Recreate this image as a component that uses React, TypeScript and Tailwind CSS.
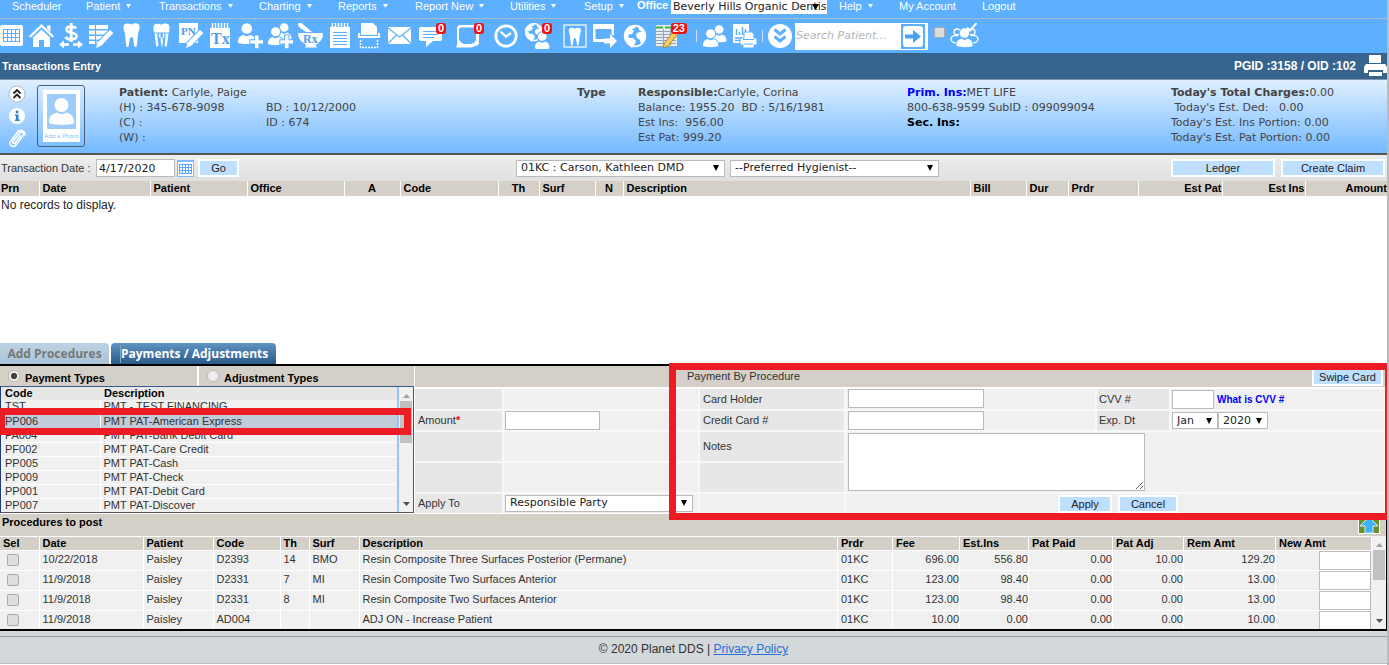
import clsx from "clsx";
import React, { useState } from "react";

const Svg = ({
  w = 24,
  children,
}: {
  w?: number;
  children: React.ReactNode;
}) => (
  <svg
    width={w}
    height={26}
    viewBox={`0 0 ${w} 26`}
    fill="#fff"
    className="shrink-0"
    aria-hidden="true"
  >
    {children}
  </svg>
);

const Person = ({ x = 0, y = 0, s = 1 }) => (
  <g transform={`translate(${x} ${y}) scale(${s})`} paintOrder="stroke">
    <circle cx="8" cy="5" r="4.8" />
    <path d="M0 18c-.4-4 1.200-6.200 5-7.400 1.800 1.800 4.200 1.800 6 0 3.800 1.200 5.400 3.400 5 7.400-2.600 1.600-13.400 1.600-16 0z" />
  </g>
);

const Tooth = ({ x = 0, y = 0, s = 1 }) => (
  <path
    transform={`translate(${x} ${y}) scale(${s})`}
    d="M1 1.800C3-.2 6 .2 8.500 1.600 11-.2 14-.2 16 1.800c1.600 3-.4 6-1 9.200-.6 4-.4 8-1.600 13-2.600.6-2.400-3-2.900-6-.3-2.500-.6-4-2-4s-1.700 1.500-2 4c-.5 3-.3 6.600-2.900 6C2.400 19 2.600 15 2 11 1.400 7.800-.6 4.800 1 1.800z"
  />
);

const Pencil = () => (
  <path
    d="M21 7l3.200 3L12.500 22.500 7 25l1.600-5.400z"
    stroke="#5cb0ff"
    strokeWidth="2"
    paintOrder="stroke"
  />
);

const Globe = ({ cx = 12, cy = 13, r = 11 }) => (
  <g transform={`translate(${cx} ${cy}) scale(${r / 11})`}>
    <circle r="10.400" fill="none" stroke="#fff" strokeWidth="1.600" />
    <path d="M-10-3C-8-8-4-11 1-10.500L0-8l-3 1 2 2-2 3-4 1 1 3 4 0 3 3-1 3-3 4C-8 8-11 3-10-3zM3-9.500C7-8 10-5 10.500 0L9 5 6 8 5 4 2 2 1-2l3-2 3 0-3-2z" />
  </g>
);

const CalendarIcon = () => (
  <Svg w={23}>
    <rect x="0" y="2" width="23" height="21" rx="2" />
    <path
      d="M3 6.500h17M3 10.500h17M3 14.500h17M3 18.500h17M3.500 6v13M7.500 6v13M11.500 6v13M15.500 6v13M19.500 6v13"
      stroke="#5cb0ff"
      fill="none"
    />
  </Svg>
);
const HomeIcon = () => (
  <Svg w={25}>
    <path d="M12.500 1L25 13l-1.500 1.800L12.500 4.300 1.500 14.800 0 13zM18 2.500h3.500V9L18 5.500z" />
    <path d="M12.500 6.500l8.500 8V24h-6v-7h-5v7H4v-9.500z" />
  </Svg>
);
const DollarIcon = () => (
  <Svg>
    <path
      d="M17 5.500c-1-2-9.500-3-9.500 1 0 4.500 10 2 10 6.500 0 4.500-9.500 4-11 1M12.200 0v19"
      fill="none"
      stroke="#fff"
      strokeWidth="2.800"
    />
    <path d="M0 21.500l5-4v2.700h5v2.600H5v2.700zM24 21.500l-5-4v2.700h-5v2.600h5v2.700z" />
  </Svg>
);
const ListEditIcon = () => (
  <Svg>
    <path d="M0 2h19v4H0zM0 7.500h19v4H0zM0 13h15v3.500H0zM0 18h9v3H0z" />
    <path d="M6.500 2v19" stroke="#5cb0ff" />
    <Pencil />
  </Svg>
);
const ToothIcon = () => (
  <Svg w={17}>
    <Tooth />
  </Svg>
);
const ToothImplantIcon = () => (
  <Svg w={17}>
    <path d="M1 2c2-2 5-1.500 7.500-.3C11 0 14 0 16 2c1 2 .6 5 0 7.500H1C.4 7 0 4 1 2zM1.500 10.500h3v4l1 8-2 1.500c-1-4-1.500-9-2-13.500zM15.500 10.500h-3v4l-1 8 2 1.500c1-4 1.500-9 2-13.500z" />
    <path d="M6 10.500h1.500l.2 8L9 25l.8-7V10.500h1.500v4H6z" />
  </Svg>
);
const NotesIcon = () => (
  <Svg>
    <path d="M0 0h19v20h-9l-3 4v-4H0z" />
    <text
      x="2"
      y="12"
      fontFamily="Liberation Serif, serif"
      fontWeight="bold"
      fontSize="11"
      fill="#4b9df0"
    >
      PN
    </text>
    <Pencil />
  </Svg>
);
const TreatmentIcon = () => (
  <Svg w={20}>
    <path d="M0 5h20v20H0z" />
    <path
      d="M2.500 0v6M5.500 0v6M8.500 0v6M11.500 0v6M14.500 0v6M17.500 0v6"
      stroke="#fff"
      strokeWidth="1.400"
    />
    <text
      x="1"
      y="21"
      fontFamily="Liberation Serif, serif"
      fontWeight="bold"
      fontSize="16"
      fill="#4b9df0"
    >
      Tx
    </text>
  </Svg>
);
const Plus = () => (
  <path
    d="M17 12.500h3.500v4.700H25v3.300h-4.500v4.700H17v-4.700h-4.700v-3.300H17z"
    stroke="#5cb0ff"
    strokeWidth="2"
    paintOrder="stroke"
  />
);
const AddPatientIcon = () => (
  <Svg w={25}>
    <Person y={0} s={1.1} />
    <Plus />
  </Svg>
);
const AddFamilyIcon = () => (
  <Svg w={25}>
    <Person x={9} y={0} s={0.9} />
    <g stroke="#5cb0ff" strokeWidth="2">
      <Person x={0} y={4} s={0.95} />
    </g>
    <Plus />
  </Svg>
);
const MortarIcon = () => (
  <Svg w={25}>
    <path d="M0 2c0-2 2-2.500 4-1.500L14 9H8L1 4zM0 10h25c0 6-3 9.500-7 11.500v1.500l1 1.500H7L8 23v-1.500C4 19.500 0 16 0 10z" />
    <text
      x="5"
      y="20"
      fontFamily="Liberation Serif, serif"
      fontWeight="bold"
      fontSize="12"
      fill="#4b9df0"
    >
      Rx
    </text>
  </Svg>
);
const NotepadIcon = () => (
  <Svg w={20}>
    <path d="M0 4h20v21H0z" />
    <path
      d="M2.500 0v6M5.500 0v6M8.500 0v6M11.500 0v6M14.500 0v6M17.500 0v6"
      stroke="#fff"
      strokeWidth="1.400"
    />
    <path
      d="M3 9.500h14M3 12.500h14M3 15.500h14M3 18.500h14M3 21.500h14"
      stroke="#5cb0ff"
    />
  </Svg>
);
const ScanIcon = () => (
  <Svg w={22}>
    <path d="M3 0h12l4 4v8H3zM0 10h2v3h18v-3h2v5H0z" />
    <path
      d="M2.500 17v7.500h17V17"
      fill="none"
      stroke="#fff"
      strokeWidth="1.500"
      strokeDasharray="2 1"
    />
  </Svg>
);
const MailIcon = () => (
  <Svg>
    <rect x="0" y="4" width="23" height="17" rx="1" />
    <path
      d="M0 5l11.500 9L23 5M0 20.500l8.500-8.500M23 20.500L14.500 12"
      fill="none"
      stroke="#5cb0ff"
      strokeWidth="1.200"
    />
  </Svg>
);
const MessageIcon = () => (
  <Svg>
    <path d="M2 4h19a2 2 0 0 1 2 2v10a2 2 0 0 1-2 2h-7l-7 6v-6H2a2 2 0 0 1-2-2V6a2 2 0 0 1 2-2z" />
    <path d="M4 8.500h15M4 11.500h15M4 14.500h11" stroke="#5cb0ff" />
  </Svg>
);
const BubbleIcon = () => (
  <Svg>
    <path
      fillRule="evenodd"
      d="M4 2h16q3 0 3 3v14q0 4-4 4-3 2-7 1.500H0Q2 21 1 18V6Q1 2 4 2zM5 4.500q-2 0-2 3v8q0 3 5 5.500h7q5-1 5-5V7q0-2.500-2-2.500z"
    />
  </Svg>
);
const ClockIcon = () => (
  <Svg>
    <circle
      cx="12"
      cy="13"
      r="10.200"
      fill="none"
      stroke="#fff"
      strokeWidth="2.800"
    />
    <path
      d="M6.500 8.500l5.500 5 5-3.500"
      fill="none"
      stroke="#fff"
      strokeWidth="2.200"
    />
  </Svg>
);
const PortalIcon = () => (
  <Svg w={25}>
    <Globe cx={9} cy={9} r={9} />
    <g stroke="#5cb0ff" strokeWidth="2">
      <Person x={10} y={9} s={0.9} />
    </g>
  </Svg>
);
const ToothBoxIcon = () => (
  <Svg>
    <rect
      x="1"
      y="2"
      width="22"
      height="22"
      fill="none"
      stroke="#fff"
      strokeWidth="1.200"
    />
    <Tooth x={5.5} y={4.5} s={0.75} />
  </Svg>
);
const ExportIcon = () => (
  <Svg>
    <path d="M0 1h21v11h-2.500V6h-16v10H11v3H0z" />
    <path d="M11 15.500h6V11l7 7-7 7v-4.500h-6z" />
  </Svg>
);
const GlobeIcon = () => (
  <Svg>
    <Globe />
  </Svg>
);
const LedgerNoteIcon = () => (
  <Svg>
    <rect x="0" y="2" width="22" height="21" fill="#e9eef2" />
    <path d="M1 3.500h7v2H1zM10 3.500h6v2h-6z" fill="#44b04a" />
    <path
      d="M1 8.500h20M1 11.500h20M1 14.500h20M1 17.500h20M1 20.500h20M8.500 6v17M15.500 6v17M.5 2v21.500h21"
      stroke="#93a5b4"
      fill="none"
    />
    <path d="M19 8l4 3L13 23l-5 2 1.500-5z" fill="#f7cf55" stroke="#a98a3a" />
  </Svg>
);
const PeopleIcon = () => (
  <Svg>
    <Person x={9} y={2} s={0.9} />
    <g stroke="#5cb0ff" strokeWidth="2">
      <Person x={0} y={6} s={0.95} />
    </g>
  </Svg>
);
const ReportPrintIcon = () => (
  <Svg>
    <path d="M0 1h16v10h-5v9H0z" />
    <path
      d="M3.500 12V6M6.500 12V9M9.500 12V4M12.500 10V6M2 15h7M2 17.500h7"
      stroke="#5cb0ff"
      strokeWidth="1.500"
    />
    <path
      d="M11 9h8l2 2v4h3v7h-3v3H10v-3H7v-7h4z"
      stroke="#5cb0ff"
      strokeWidth="1"
    />
    <path d="M10 16.500h11M11 21h9" stroke="#5cb0ff" />
  </Svg>
);
const DoubleDownIcon = () => (
  <Svg>
    <circle cx="12" cy="13" r="12" />
    <path
      d="M6.500 6.500l5.500 4.500 5.500-4.500M6.500 13.500l5.500 4.500 5.500-4.500"
      fill="none"
      stroke="#5cb0ff"
      strokeWidth="3"
    />
  </Svg>
);
const PeopleCheckIcon = () => (
  <Svg w={29}>
    <g fill="none" stroke="#fff" strokeWidth="1.300">
      <circle cx="7" cy="9" r="3" />
      <circle cx="22" cy="9" r="3" />
      <path d="M8 20c-9 0-8-6-4-7.500h4M21 20c9 0 8-6 4-7.500h-4" />
    </g>
    <g stroke="#5cb0ff" strokeWidth="2">
      <Person x={6.5} y={5} s={1} />
    </g>
    <path
      d="M17 4.500l3 3L26.500 0"
      fill="none"
      stroke="#fff"
      strokeWidth="2"
    />
  </Svg>
);

const toolbarIcons: {
  label: string;
  icon: React.FC;
  cell: string;
  badge?: string;
}[] = [
  { label: "Scheduler", icon: CalendarIcon, cell: "w-[26px] justify-start" },
  { label: "Home", icon: HomeIcon, cell: "w-[30px]" },
  { label: "Transactions", icon: DollarIcon, cell: "w-[30px]" },
  { label: "Ledger", icon: ListEditIcon, cell: "w-[30px]" },
  { label: "Restorative chart", icon: ToothIcon, cell: "w-[30px]" },
  { label: "Perio chart", icon: ToothImplantIcon, cell: "w-[30px]" },
  { label: "Progress notes", icon: NotesIcon, cell: "w-[30px]" },
  { label: "Treatment plan", icon: TreatmentIcon, cell: "w-[28px]" },
  { label: "Add patient", icon: AddPatientIcon, cell: "w-[32px]" },
  { label: "Add family member", icon: AddFamilyIcon, cell: "w-[28px]" },
  { label: "Prescriptions", icon: MortarIcon, cell: "w-[32px]" },
  { label: "Notes", icon: NotepadIcon, cell: "w-[28px]" },
  { label: "Scan", icon: ScanIcon, cell: "w-[30px]" },
  { label: "Mail", icon: MailIcon, cell: "w-[32px]" },
  { label: "Messages", icon: MessageIcon, cell: "w-[30px]", badge: "0" },
  { label: "Chat", icon: BubbleIcon, cell: "w-[44px]", badge: "0" },
  { label: "Time clock", icon: ClockIcon, cell: "w-[32px]" },
  { label: "Patient portal", icon: PortalIcon, cell: "w-[30px]", badge: "0" },
  { label: "Imaging", icon: ToothBoxIcon, cell: "w-[30px] ml-2" },
  { label: "Export", icon: ExportIcon, cell: "w-[30px]" },
  { label: "Web", icon: GlobeIcon, cell: "w-[30px]" },
  { label: "Claims", icon: LedgerNoteIcon, cell: "w-[34px]", badge: "23" },
];

const menuLeft = [
  { label: "Scheduler", width: "w-[74px]", arrow: false },
  { label: "Patient", width: "w-[73px]", arrow: true },
  { label: "Transactions", width: "w-[100px]", arrow: true },
  { label: "Charting", width: "w-[79px]", arrow: true },
  { label: "Reports", width: "w-[77px]", arrow: true },
  { label: "Report New", width: "w-[95px]", arrow: true },
  { label: "Utilities", width: "w-[74px]", arrow: true },
  { label: "Setup", width: "w-[53px]", arrow: true },
];

const menuRight = [
  { label: "Help", width: "w-[60px]", arrow: true },
  { label: "My Account", width: "w-[83px]", arrow: false },
  { label: "Logout", width: "w-[60px]", arrow: false },
];

const transactionColumns = [
  { label: "Prn", width: "w-[39px]", align: "text-left" },
  { label: "Date", width: "w-[111px]", align: "text-left" },
  { label: "Patient", width: "w-[97px]", align: "text-left" },
  { label: "Office", width: "w-[97px]", align: "text-left" },
  { label: "A", width: "w-[56px]", align: "text-center" },
  { label: "Code", width: "w-[98px]", align: "text-left" },
  { label: "Th", width: "w-[41px]", align: "text-center" },
  { label: "Surf", width: "w-[56px]", align: "text-left" },
  { label: "N", width: "w-[28px]", align: "text-center" },
  { label: "Description", width: "", align: "text-left" },
  { label: "Bill", width: "w-[56px]", align: "text-left" },
  { label: "Dur", width: "w-[42px]", align: "text-left" },
  { label: "Prdr", width: "w-[70px]", align: "text-left" },
  { label: "Est Pat", width: "w-[84px]", align: "text-right" },
  { label: "Est Ins", width: "w-[83px]", align: "text-right" },
  { label: "Amount", width: "w-[82px]", align: "text-right" },
];

const paymentTypes = [
  ["TST", "PMT - TEST FINANCING"],
  ["PP006", "PMT PAT-American Express"],
  ["PA004", "PMT PAT-Bank Debit Card"],
  ["PF002", "PMT PAT-Care Credit"],
  ["PP005", "PMT PAT-Cash"],
  ["PP009", "PMT PAT-Check"],
  ["PP001", "PMT PAT-Debit Card"],
  ["PP007", "PMT PAT-Discover"],
];

const procedureColumns = [
  { label: "Sel", width: "w-[39px]" },
  { label: "Date", width: "w-[104px]" },
  { label: "Patient", width: "w-[70px]" },
  { label: "Code", width: "w-[67px]" },
  { label: "Th", width: "w-[29px]" },
  { label: "Surf", width: "w-[50px]" },
  { label: "Description", width: "" },
  { label: "Prdr", width: "w-[55px]" },
  { label: "Fee", width: "w-[67px]" },
  { label: "Est.Ins", width: "w-[69px]" },
  { label: "Pat Paid", width: "w-[84px]" },
  { label: "Pat Adj", width: "w-[71px]" },
  { label: "Rem Amt", width: "w-[92px]" },
  { label: "New Amt", width: "w-[96px]" },
];

const procedures = [
  {
    text: [
      "10/22/2018",
      "Paisley",
      "D2393",
      "14",
      "BMO",
      "Resin Composite Three Surfaces Posterior (Permane)",
      "01KC",
    ],
    amounts: ["696.00", "556.80", "0.00", "10.00", "129.20"],
  },
  {
    text: [
      "11/9/2018",
      "Paisley",
      "D2331",
      "7",
      "MI",
      "Resin Composite Two Surfaces Anterior",
      "01KC",
    ],
    amounts: ["123.00", "98.40", "0.00", "0.00", "13.00"],
  },
  {
    text: [
      "11/9/2018",
      "Paisley",
      "D2331",
      "8",
      "MI",
      "Resin Composite Two Surfaces Anterior",
      "01KC",
    ],
    amounts: ["123.00", "98.40", "0.00", "0.00", "13.00"],
  },
  {
    text: [
      "11/9/2018",
      "Paisley",
      "AD004",
      "",
      "",
      "ADJ ON - Increase Patient",
      "01KC",
    ],
    amounts: ["10.00", "0.00", "0.00", "0.00", "10.00"],
  },
];

function Select({
  label,
  options,
  className,
}: {
  label: string;
  options: string[];
  className: string;
}) {
  return (
    <span className={clsx("relative inline-flex shrink-0", className)}>
      <select
        aria-label={label}
        className="w-full h-full appearance-none border border-[#bbb] bg-white pl-1 text-[11px] leading-[14px] text-[#222] font-['DejaVu_Sans',sans-serif]"
      >
        {options.map((option) => (
          <option key={option}>{option}</option>
        ))}
      </select>
      <svg
        className="absolute right-[6px] top-1/2 -translate-y-1/2 pointer-events-none"
        width="6"
        height="6"
        viewBox="0 0 6 6"
      >
        <path d="M0 0h6L3 6z" fill="#000" />
      </svg>
    </span>
  );
}

function Button({
  className,
  children,
}: {
  className: string;
  children: React.ReactNode;
}) {
  return (
    <button
      type="button"
      className={clsx(
        "shrink-0 border-2 border-white bg-[#bfdfff] text-center text-[11px] leading-[14px] text-[#222]",
        className
      )}
    >
      {children}
    </button>
  );
}

const Input = ({ label, className }: { label: string; className: string }) => (
  <input
    type="text"
    aria-label={label}
    className={clsx("block border border-[#bbb] bg-white", className)}
  />
);

function ScrollBar({ thumb }: { thumb: string }) {
  return (
    <div className="w-[14px] shrink-0 bg-[#f1f1f1] flex flex-col items-center py-1">
      <svg width="7" height="10" viewBox="0 0 7 10">
        <path d="M0 7l3.500-4L7 7z" fill="#a3a3a3" />
      </svg>
      <div className={clsx("w-3 bg-[#c1c1c1]", thumb)} />
      <svg className="mt-auto" width="7" height="8" viewBox="0 0 7 8">
        <path d="M0 2l3.500 4L7 2z" fill="#505050" />
      </svg>
    </div>
  );
}

function MenuItem({
  label,
  width,
  arrow,
}: {
  label: string;
  width: string;
  arrow: boolean;
}) {
  return (
    <a href="#" className={clsx("flex items-center shrink-0", width)}>
      {label}
      {arrow && (
        <svg className="ml-[6px]" width="5" height="4" viewBox="0 0 5 4">
          <path d="M0 0h5L2.500 4z" fill="#fff" />
        </svg>
      )}
    </a>
  );
}

function TopMenu() {
  return (
    <nav className="flex items-start h-[19px] pl-3 border-b border-[#a9bccd] bg-[#5cb0ff] text-[11px] leading-3 text-white">
      {menuLeft.map((item) => (
        <MenuItem key={item.label} {...item} />
      ))}
      <span className="w-[34px] font-bold leading-[11px]">Office</span>
      <div className="relative w-[156px] h-[14px] mr-3 shrink-0">
        <select
          aria-label="Office"
          className="w-full h-full appearance-none bg-white pl-[2px] text-[11px] leading-[14px] text-[#222] font-['DejaVu_Sans',sans-serif]"
        >
          <option>Beverly Hills Organic Dentistry</option>
        </select>
        <svg
          className="absolute right-2 top-1 pointer-events-none"
          width="7"
          height="6"
          viewBox="0 0 7 6"
        >
          <path d="M0 0h7L3.500 6z" fill="#000" />
        </svg>
      </div>
      {menuRight.map((item) => (
        <MenuItem key={item.label} {...item} />
      ))}
    </nav>
  );
}

function Toolbar() {
  return (
    <div className="flex items-center h-[34px] bg-[#5cb0ff]">
      {toolbarIcons.map(({ label, icon: Icon, cell, badge }) => (
        <button
          key={label}
          type="button"
          aria-label={label}
          className={clsx(
            "relative flex items-center justify-center shrink-0",
            cell
          )}
        >
          <Icon />
          {badge && (
            <span
              className={clsx(
                "absolute top-0 h-[11px] px-[2px] rounded-[3px] bg-[#f01010] text-white text-[11px] leading-[11px] font-bold",
                badge.length > 1
                  ? "-right-[3px]"
                  : label === "Chat"
                    ? "right-[6px]"
                    : "right-0"
              )}
            >
              {badge}
            </span>
          )}
        </button>
      ))}
      <span className="w-px h-3 ml-3 mr-[6px] bg-[#cfe2f5]" />
      <button type="button" aria-label="Patients">
        <PeopleIcon />
      </button>
      <button type="button" aria-label="Print reports" className="ml-[6px]">
        <ReportPrintIcon />
      </button>
      <span className="w-px h-3 mx-[5px] bg-[#cfe2f5]" />
      <button type="button" aria-label="More">
        <DoubleDownIcon />
      </button>
      <div className="flex items-center w-[133px] h-[27px] ml-[3px] shrink-0 bg-white">
        <input
          type="text"
          aria-label="Search patient"
          placeholder="Search Patient..."
          className="w-[106px] pl-px text-[11px] italic placeholder:text-[#b5b5b5] font-['DejaVu_Sans',sans-serif]"
        />
        <button type="button" aria-label="Search" className="bg-[#5cb0ff]">
          <svg width="24" height="25" viewBox="0 0 24 25">
            <rect x="2" y="2" width="20" height="21" rx="3" fill="#fff" />
            <path d="M4 10.500h8V6l8 6.500-8 6.500v-4.500H4z" fill="#4a9ff0" />
          </svg>
        </button>
      </div>
      <input
        type="checkbox"
        aria-label="All patients"
        className="appearance-none w-[11px] h-[11px] ml-[6px] mb-2 rounded-xs border border-[#aaa] bg-[#ddd] shrink-0"
      />
      <button type="button" aria-label="Check in" className="ml-[5px]">
        <PeopleCheckIcon />
      </button>
    </div>
  );
}

function PatientHeader() {
  return (
    <section className="flex h-[76px] pt-[5px] border-t border-t-[#7d93a8] border-b-2 border-b-[#55564c] bg-linear-to-b from-[#dfefff] to-[#72b9ff] text-[11px] leading-[15px] text-[#444] whitespace-pre font-['DejaVu_Sans',sans-serif]">
      <div className="flex flex-col items-center justify-between w-[34px] pb-1 shrink-0">
        <svg width="18" height="18" viewBox="0 0 18 18">
          <circle cx="9" cy="9" r="8" fill="#fff" stroke="#b5bcc4" />
          <path
            d="M5.500 8.500L9 5l3.500 3.500M5.500 13L9 9.500l3.500 3.500"
            fill="none"
            stroke="#222"
            strokeWidth="1.800"
          />
        </svg>
        <svg width="16" height="16" viewBox="0 0 16 16">
          <circle cx="8" cy="8" r="8" fill="#fff" />
          <path
            d="M6.800 2.800h2.600v2.400H6.800zM6 6.500h3.500v5h1.200V13H6v-1.500h1V8H6z"
            fill="#2a84c8"
          />
        </svg>
        <svg width="18" height="21" viewBox="0 0 18 21">
          <path
            d="M13 7l-6 8c-1 1.500-3 0-2-1.500L11.500 5c2-2.500 5.500 0 3.500 2.800L8 17c-2.800 3.500-8 0-5.300-3.800L9.500 4C12.500.3 18 3 16.500 7.500"
            fill="none"
            stroke="#fff"
            strokeWidth="1.500"
          />
        </svg>
      </div>
      <div className="w-[85px] pl-[3px] shrink-0">
        <button
          type="button"
          className="flex justify-center items-center w-[48px] h-[62px] rounded-[3px] border border-[#4b6076]"
        >
          <svg width="37" height="52" viewBox="0 0 37 52">
            <rect width="37" height="52" fill="#fff" />
            <rect x="4" y="4" width="29" height="35" fill="#9dccfb" />
            <circle cx="18.500" cy="15" r="7" fill="#fff" />
            <path
              d="M6 33c0-6 2-9 8-10.500 2.500 2 6.500 2 9 0C29 24 31 27 31 33c-3 2.500-22 2.500-25 0z"
              fill="#fff"
            />
            <text
              x="18.500"
              y="48"
              textAnchor="middle"
              fontSize="6"
              fill="#7dbbf5"
              fontFamily="Open Sans, sans-serif"
            >
              Add a Photo
            </text>
          </svg>
        </button>
      </div>
      <div className="w-[147px] shrink-0">
        <p>
          <b>Patient:</b> Carlyle, Paige
        </p>
        <p>(H) : 345-678-9098</p>
        <p>(C) :</p>
        <p>(W) :</p>
      </div>
      <div className="w-[311px] pt-[15px] shrink-0">
        <p>BD : 10/12/2000</p>
        <p>ID : 674</p>
      </div>
      <b className="w-[61px] shrink-0">Type</b>
      <div className="w-[269px] shrink-0">
        <p>
          <b>Responsible:</b>Carlyle, Corina
        </p>
        <p>Balance: 1955.20  BD : 5/16/1981</p>
        <p>Est Ins:  956.00</p>
        <p>Est Pat: 999.20</p>
      </div>
      <div className="grow">
        <p>
          <b className="text-[#00f]">Prim. Ins:</b>MET LIFE
        </p>
        <p>800-638-9599 SubID : 099099094</p>
        <b className="text-black">Sec. Ins:</b>
      </div>
      <div className="w-[216px] shrink-0">
        <p>
          <b>Today's Total Charges:</b>0.00
        </p>
        <p> Today's Est. Ded:   0.00</p>
        <p>Today's Est. Ins Portion: 0.00</p>
        <p>Today's Est. Pat Portion: 0.00</p>
      </div>
    </section>
  );
}

function FilterBar() {
  return (
    <div className="flex items-center h-[26px] pr-[2px] bg-linear-to-b from-[#eee] to-[#e0e0e0]">
      <label htmlFor="transactionDate" className="w-[96px] pl-px text-[#333]">
        Transaction Date :
      </label>
      <input
        id="transactionDate"
        type="text"
        defaultValue="4/17/2020"
        className="w-[79px] h-[18px] pl-[2px] border border-[#bbb] bg-white text-[#222] font-['DejaVu_Sans',sans-serif]"
      />
      <button type="button" aria-label="Open calendar" className="ml-[2px]">
        <svg width="17" height="17" viewBox="0 0 17 17">
          <rect width="17" height="17" fill="#7fbcf8" />
          <path d="M1 2h15v14H1z" fill="#fff" />
          <path
            d="M2 4.500h13M2 7.500h13M2 10.500h13M2 13.500h13M2.500 4v10M5.500 4v10M8.500 4v10M11.500 4v10M14.500 4v10"
            stroke="#5aa7f5"
          />
        </svg>
      </button>
      <Button className="w-[41px] h-[18px] ml-1">Go</Button>
      <Select
        label="Provider"
        options={["01KC : Carson, Kathleen DMD"]}
        className="w-[209px] h-[17px] ml-[277px]"
      />
      <Select
        label="Hygienist"
        options={["--Preferred Hygienist--"]}
        className="w-[209px] h-[17px] ml-[5px]"
      />
      <Button className="w-[104px] h-[18px] ml-auto">Ledger</Button>
      <Button className="w-[104px] h-[18px] ml-[6px]">Create Claim</Button>
    </div>
  );
}

function TransactionTable() {
  return (
    <section className="h-[162px]">
      <table className="w-full table-fixed border-collapse">
        <thead>
          <tr className="h-[15px] bg-[#d4d0c8] text-black leading-[15px]">
            {transactionColumns.map(({ label, width, align }, i) => (
              <th
                key={label}
                className={clsx(
                  "p-0 font-bold border-r border-white last:border-r-0",
                  width,
                  align,
                  align === "text-left" && (i === 0 ? "pl-px" : "pl-[3px]")
                )}
              >
                {label}
              </th>
            ))}
          </tr>
        </thead>
        <tbody>
          <tr>
            <td
              colSpan={16}
              className="pl-px pt-px text-xs leading-4 text-[#222]"
            >
              No records to display.
            </td>
          </tr>
        </tbody>
      </table>
    </section>
  );
}

function PaymentTypeList() {
  const [selected, setSelected] = useState("PP006");

  return (
    <div className="relative w-[414px] shrink-0">
      <div className="flex h-5 gap-[2px] leading-4 font-bold text-black">
        <label className="flex w-[197px] pl-2 gap-[5px] bg-[#d4d0c8]">
          <input
            type="radio"
            name="type"
            defaultChecked
            className="appearance-none w-3 h-3 mt-1 rounded-full border border-[#bbb] bg-[#eee] checked:bg-radial checked:from-[#444] checked:from-40% checked:to-[#eee] checked:to-50%"
          />
          <span className="pt-1">Payment Types</span>
        </label>
        <label className="flex grow pl-2 gap-[5px] bg-[#d4d0c8]">
          <input
            type="radio"
            name="type"
            className="appearance-none w-3 h-3 mt-1 rounded-full border border-[#bbb] bg-[#eee] checked:bg-radial checked:from-[#444] checked:from-40% checked:to-[#eee] checked:to-50%"
          />
          <span className="pt-1">Adjustment Types</span>
        </label>
      </div>
      <div className="flex h-[127px] overflow-hidden border border-[#555] border-t-[#3d5a94] border-l-[#1f3d7a]">
        <table className="grow table-fixed border-collapse border-r-2 border-[#9bc0f5] text-[#333]">
          <thead>
            <tr className="h-[13px] bg-[#e7e7e7] text-left text-black leading-[13px]">
              <th className="w-[99px] p-0 pl-1">Code</th>
              <th className="p-0 pl-1">Description</th>
            </tr>
          </thead>
          <tbody>
            {paymentTypes.map(([code, description]) => (
              <tr
                key={code}
                onClick={() => setSelected(code)}
                className={clsx(
                  "h-[14px] leading-[13px] border-b border-white",
                  selected === code ? "bg-[#c0ccd9]" : "bg-[#f0f0f0]"
                )}
              >
                <td className="p-0 pl-1 border-r border-white">{code}</td>
                <td className="p-0 pl-[3px]">{description}</td>
              </tr>
            ))}
          </tbody>
        </table>
        <ScrollBar thumb="h-[42px]" />
      </div>
      <div className="absolute left-0 top-[42px] w-[411px] h-[27px] border-[7px] border-l-[5px] border-[#ed1c24] pointer-events-none" />
    </div>
  );
}

function PaymentForm() {
  return (
    <div className="grow flex flex-col ml-px">
      <div className="flex items-center justify-between h-[21px] pl-[272px] pr-1 bg-[#d4d0c8]">
        <span>Payment By Procedure</span>
        <Button className="w-[71px] h-[19px]">Swipe Card</Button>
      </div>
      <div className="grid grow mt-[2px] gap-[2px] grid-cols-[87px_194px_144px_minmax(249px,1fr)_72px_216px] grid-rows-[20px_19px_29px_29px_19px] bg-[#f8f8f8] *:bg-[#f0f0f0]">
        <span className="bg-[#e7e7e7]!" />
        <span />
        <span className="bg-[#e7e7e7]! pl-[3px] leading-5">Card Holder</span>
        <div className="pl-[2px]">
          <Input label="Card Holder" className="w-[136px] h-[19px]" />
        </div>
        <span className="bg-[#e7e7e7]! pl-[2px] leading-5">CVV #</span>
        <div className="flex items-center pl-px">
          <Input label="CVV #" className="w-[42px] h-[19px]" />
          <a href="#" className="ml-[3px] font-bold text-[10px] text-[#00f]">
            What is CVV #
          </a>
        </div>

        <span className="bg-[#e7e7e7]! pl-[3px] leading-[19px]">
          Amount<b className="text-[#f00]">*</b>
        </span>
        <div className="pl-px">
          <Input label="Amount" className="w-[95px] h-[19px]" />
        </div>
        <span className="bg-[#e7e7e7]! pl-[3px] leading-[19px]">
          Credit Card #
        </span>
        <div className="pl-[2px]">
          <Input label="Credit Card #" className="w-[136px] h-[19px]" />
        </div>
        <span className="bg-[#e7e7e7]! pl-[2px] leading-[19px]">Exp. Dt</span>
        <div className="flex items-center pl-px">
          <Select
            label="Expiry month"
            options={["Jan"]}
            className="w-[46px] h-[17px]"
          />
          <Select
            label="Expiry year"
            options={["2020"]}
            className="w-[50px] h-[17px]"
          />
        </div>

        <span className="bg-[#e7e7e7]!" />
        <span />
        <span className="bg-[#e7e7e7]! pl-[3px] leading-[29px]">Notes</span>
        <div className="col-span-3 row-span-2 pl-[2px] pt-px">
          <textarea
            aria-label="Notes"
            className="block w-[297px] h-[58px] border border-[#bbb] bg-white resize"
          />
        </div>
        <span className="bg-[#e7e7e7]!" />
        <span />
        <span className="bg-[#e7e7e7]!" />

        <span className="bg-[#e7e7e7]! pl-[3px] leading-[19px]">Apply To</span>
        <div className="pl-px">
          <Select
            label="Apply To"
            options={["Responsible Party"]}
            className="w-[188px] h-[17px]"
          />
        </div>
        <span />
        <div className="col-span-3 flex items-center pl-[212px] gap-[6px]">
          <Button className="w-[54px] h-[18px]">Apply</Button>
          <Button className="w-[60px] h-[18px]">Cancel</Button>
        </div>
      </div>
    </div>
  );
}

function PaymentPanel() {
  return (
    <section>
      <div className="flex items-end gap-[2px] h-[21px] text-xs leading-[18px] font-bold whitespace-nowrap font-['Open_Sans',sans-serif]">
        <button
          type="button"
          className="w-[109px] h-full rounded-tr-sm bg-linear-to-b from-[#bdd3e4] to-[#a9c3d8] text-[#777]"
        >
          Add Procedures
        </button>
        <button
          type="button"
          className="w-[165px] h-full rounded-t-sm bg-linear-to-b from-[#5f94c2] to-[#2b5a88] text-white"
        >
          <span className="block ml-[9px] border-l border-[#7ea9cf] text-left">
            Payments / Adjustments
          </span>
        </button>
      </div>
      <div className="relative flex border-t-2 border-black">
        <PaymentTypeList />
        <PaymentForm />
        <div className="absolute left-[669px] right-0 -top-[3px] h-[157px] border-[7px] border-r-2 border-[#ed1c24] z-10 pointer-events-none" />
      </div>
    </section>
  );
}

function ProceduresToPost() {
  return (
    <section className="border-b-2 border-r border-black">
      <div className="flex items-start justify-between h-[22px] mt-px pl-[2px] pr-[6px] bg-[#d4d0c8]">
        <h2 className="font-bold text-black leading-4">Procedures to post</h2>
        <button type="button" aria-label="Move up">
          <svg width="22" height="20" viewBox="0 0 22 20">
            <rect width="22" height="20" fill="#fff" />
            <rect x="1" width="20" height="19" fill="#6c8f2c" />
            <path
              d="M11 3l9 9h-5v7H7v-7H2z"
              fill="#3fb2f5"
              stroke="#d8f0ff"
            />
          </svg>
        </button>
      </div>
      <div className="flex h-[93px] overflow-hidden">
        <table className="grow table-fixed border-collapse text-[#333]">
          <thead>
            <tr className="bg-[#d4d0c8] text-left text-black leading-[13px]">
              {procedureColumns.map(({ label, width }) => (
                <th
                  key={label}
                  className={clsx(
                    "p-0 pl-[3px] border border-l-0 border-white",
                    width
                  )}
                >
                  {label}
                </th>
              ))}
            </tr>
          </thead>
          <tbody>
            {procedures.map((procedure, i) => (
              <tr
                key={i}
                className="h-5 leading-[17px] bg-[#f0f0f0] border-b border-white align-top"
              >
                <td className="p-0 pt-[3px] pl-[7px] border-r border-white">
                  <input
                    type="checkbox"
                    aria-label={`Select procedure ${i + 1}`}
                    className="block appearance-none w-3 h-3 rounded-xs border border-[#aaa] bg-[#ddd]"
                  />
                </td>
                {procedure.text.map((value, j) => (
                  <td key={j} className="p-0 pl-[3px] border-r border-white">
                    {value}
                  </td>
                ))}
                {procedure.amounts.map((value, j) => (
                  <td key={j} className="p-0 border-r border-white text-right">
                    {value}
                  </td>
                ))}
                <td className="p-0">
                  <Input
                    label={`New amount ${i + 1}`}
                    className="w-[52px] h-[19px] ml-auto mr-px"
                  />
                </td>
              </tr>
            ))}
          </tbody>
        </table>
        <ScrollBar thumb="h-[30px]" />
      </div>
    </section>
  );
}

function App() {
  return (
    <div className="min-h-screen overflow-hidden border-r-2 border-[#bbb] bg-white text-[11px] text-[#333] font-['Liberation_Sans',Arial,sans-serif]">
      <TopMenu />
      <Toolbar />
      <header className="flex items-center justify-between h-[26px] pl-[2px] bg-[#36648f] text-white font-bold">
        <h1>Transactions Entry</h1>
        <div className="flex items-center gap-2 text-xs whitespace-pre">
          <span>PGID :3158 / OID :102</span>
          <button type="button" aria-label="Print">
            <svg width="23" height="22" viewBox="0 0 23 22" fill="#fff">
              <path d="M5 0h12v8H5zM2 9h19l2 3v6h-4v-3H4v3H0v-6zM5 17h13v4H5z" />
            </svg>
          </button>
        </div>
      </header>
      <PatientHeader />
      <FilterBar />
      <TransactionTable />
      <PaymentPanel />
      <ProceduresToPost />
      <footer className="pt-[5px] bg-[#d3d8db] text-xs">
        <p className="h-7 border-y border-t-[#999] border-b-[#bbb] text-center leading-6">
          © 2020 Planet DDS |{" "}
          <a href="#" className="text-[#2a6fd6] underline">
            Privacy Policy
          </a>
        </p>
      </footer>
    </div>
  );
}

export default App;
